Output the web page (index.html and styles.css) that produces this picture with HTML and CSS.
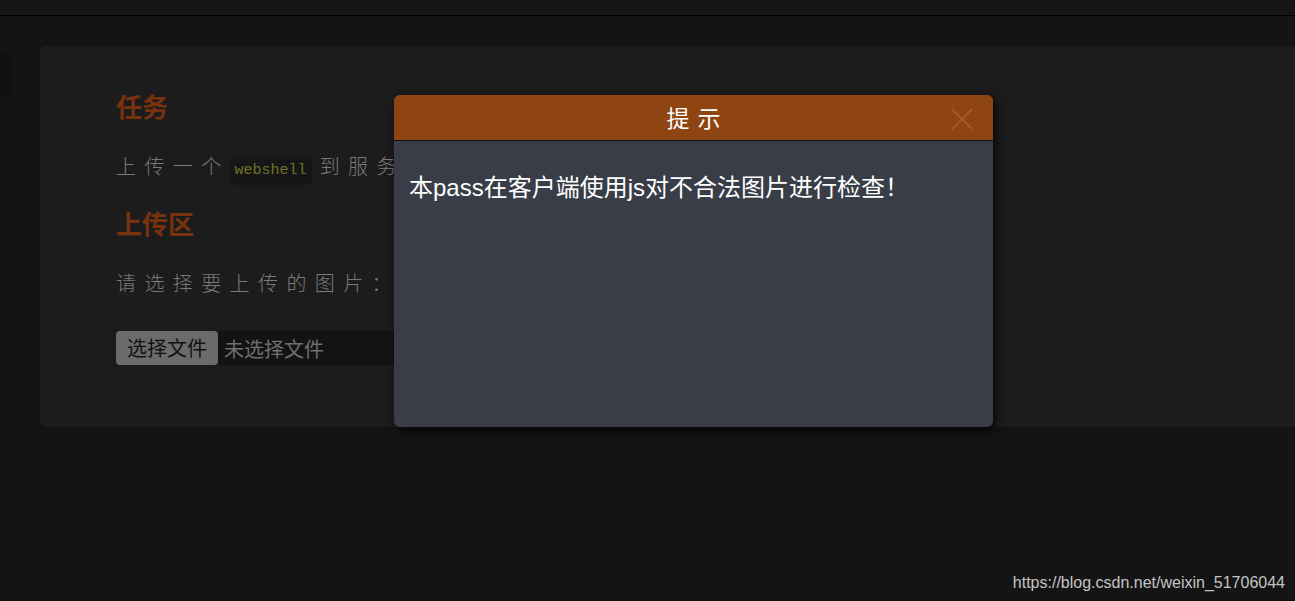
FILE: index.html
```html
<!DOCTYPE html>
<html lang="zh-CN">
<head>
    <meta charset="UTF-8">
    <title>upload-labs</title>
    <link rel="stylesheet" href="styles.css">
</head>
<body>
    <div class="topbar"></div>
    <div class="page">
        <div class="side-tab"></div>
        <div class="panel">
            <h2>任务</h2>
            <p class="line">上传一个<code>webshell</code>到服务器。</p>
            <h2>上传区</h2>
            <p class="line">请选择要上传的图片：</p>
            <div class="file-input">
                <span class="file-btn">选择文件</span>
                <span class="file-name">未选择文件</span>
            </div>
        </div>
    </div>

    <div class="dialog">
        <div class="dialog-head">
            <span class="dialog-title">提示</span>
            <svg class="dialog-close" width="22" height="22" viewBox="0 0 22 22">
                <path d="M1 1 L21 21 M21 1 L1 21" stroke="#a8612f" stroke-width="1.5" fill="none"/>
            </svg>
        </div>
        <div class="dialog-body">本pass在客户端使用js对不合法图片进行检查！</div>
    </div>

    <div class="watermark">https://blog.csdn.net/weixin_51706044</div>
</body>
</html>
```

FILE: styles.css
```css
body {
    margin: 0;
    background-color: #141414;
    font-family: "Noto Sans CJK SC", "Liberation Sans", sans-serif;
    height: 601px;
    overflow: hidden;
}

.topbar {
    height: 15px;
    background-color: #161616;
    border-bottom: 1px solid #000;
}

.page {
    display: flex;
    align-items: flex-start;
    padding-top: 30px;
}

.side-tab {
    width: 12px;
    height: 41px;
    margin-top: 8px;
    background-color: #111;
    border-radius: 0 6px 6px 0;
    flex-shrink: 0;
}

.panel {
    margin-left: 28px;
    flex: 1;
    height: 381px;
    box-sizing: border-box;
    padding: 43px 0 0 76px;
    background-color: #1c1c1c;
    border-radius: 6px 0 0 6px;
}

.panel h2 {
    margin: 0;
    font-size: 26px;
    line-height: 34px;
    font-weight: bold;
    color: #78320e;
}

.panel .line {
    margin: 26px 0 18px;
    font-size: 20px;
    line-height: 34px;
    letter-spacing: 8.4px;
    color: #7a7a7a;
    font-weight: 300;
}

.panel code {
    font-family: "Liberation Mono", monospace;
    font-size: 15px;
    letter-spacing: 0;
    color: #727226;
    background-color: #161616;
    padding: 6px 5px;
    margin: 0 8px 0 0;
    border-radius: 5px;
}

.file-input {
    display: flex;
    margin-top: 31px;
    width: 300px;
    height: 34px;
    background-color: #131313;
    font-size: 20px;
}

.file-btn {
    width: 102px;
    box-sizing: border-box;
    background-color: #6b6b6b;
    color: #111;
    border-radius: 4px;
    text-align: center;
    line-height: 34px;
}

.file-name {
    padding-left: 6px;
    line-height: 36px;
    color: #6f6f6f;
}

.dialog {
    position: absolute;
    left: 394px;
    top: 95px;
    width: 599px;
    height: 332px;
    background-color: #393d48;
    border-radius: 6px;
    overflow: hidden;
    box-shadow: 3px 4px 8px rgba(0, 0, 0, 0.75);
}

.dialog-head {
    position: relative;
    height: 45px;
    background-color: #8f4512;
    border-bottom: 1px solid #111;
    text-align: center;
}

.dialog-title {
    font-size: 23px;
    line-height: 45px;
    letter-spacing: 8px;
    padding-left: 8px;
    color: #fff;
}

.dialog-close {
    position: absolute;
    right: 20px;
    top: 13px;
}

.dialog-body {
    padding: 32px 15px;
    font-family: "Liberation Sans", "Noto Sans CJK SC", sans-serif;
    font-size: 24px;
    line-height: 30px;
    color: #fff;
}

.watermark {
    position: absolute;
    right: 10px;
    bottom: 9px;
    font-family: "Liberation Sans", Arial, sans-serif;
    font-size: 16px;
    color: #c4c4c4;
}
```
